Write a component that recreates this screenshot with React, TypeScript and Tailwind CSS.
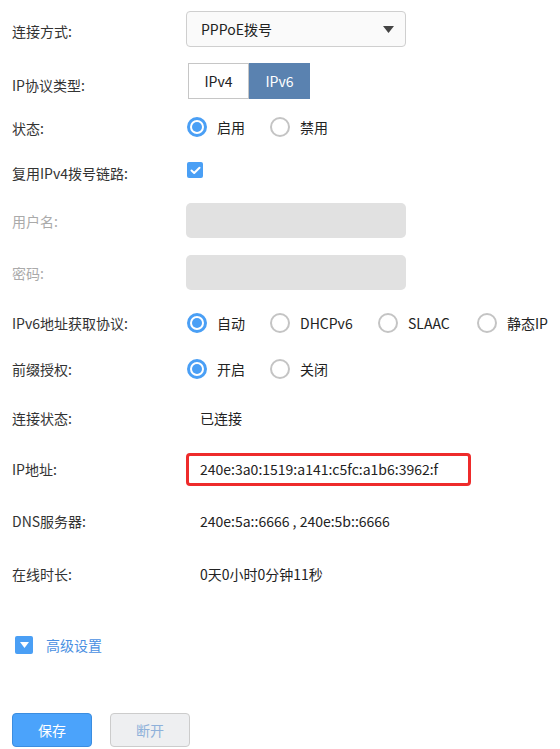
import React from 'react';

const font = { fontFamily: '"Microsoft YaHei", "Noto Sans CJK SC", "Noto Sans", sans-serif' };

function Radio({ checked, label }: { checked?: boolean; label: string }) {
  return (
    <div className="flex items-center">
      {checked ? (
        <span className="w-[20px] h-[20px] rounded-full border-[3px] border-[#4a9ff5] flex items-center justify-center">
          <span className="w-[10px] h-[10px] rounded-full bg-[#4a9ff5]" />
        </span>
      ) : (
        <span className="w-[20px] h-[20px] rounded-full border-[2px] border-[#c4c4c4] bg-white" />
      )}
      <span className="ml-[10px] text-[14px] text-[#222]">{label}</span>
    </div>
  );
}

function Row({
  label,
  h,
  mt,
  dim,
  labelShift = '',
  children,
}: {
  label: string;
  h: string;
  mt: string;
  dim?: boolean;
  labelShift?: string;
  children: React.ReactNode;
}) {
  return (
    <div className={`flex items-center ${h} ${mt}`}>
      <div className={`w-[174px] shrink-0 text-[14px] ${dim ? 'text-[#aaaaaa]' : 'text-[#333]'} ${labelShift}`}>
        {label}
      </div>
      <div className="flex items-center">{children}</div>
    </div>
  );
}

export default function App() {
  return (
    <div className="w-[560px] h-[749px] bg-white overflow-hidden pl-[12px] pt-[11px]" style={font}>
      <Row label="连接方式:" h="h-[36px]" mt="mt-0" labelShift="mt-[4px]">
        <div className="w-[220px] h-[36px] rounded-[4px] border border-[#cfcfcf] bg-[#fafafa] flex items-center justify-between pl-[14px] pr-[11px]">
          <span className="text-[14px] text-[#222]">PPPoE拨号</span>
          <svg width="11" height="7" viewBox="0 0 11 7">
            <path d="M0 0 L11 0 L5.5 7 Z" fill="#444" />
          </svg>
        </div>
      </Row>

      <Row label="IP协议类型:" h="h-[36px]" mt="mt-[16px]" labelShift="mt-[8px]">
        <div className="flex ml-[2px]">
          <div className="w-[61px] h-[36px] border border-[#c6c6c6] bg-white flex items-center justify-center text-[14px] text-[#222]">
            IPv4
          </div>
          <div className="w-[61px] h-[36px] bg-[#5a82b0] flex items-center justify-center text-[14px] text-white">
            IPv6
          </div>
        </div>
      </Row>

      <Row label="状态:" h="h-[20px]" mt="mt-[18px]" labelShift="mt-[2px]">
        <div className="flex items-center ml-[1px]">
          <div className="w-[83px]">
            <Radio checked label="启用" />
          </div>
          <Radio label="禁用" />
        </div>
      </Row>

      <Row label="复用IPv4拨号链路:" h="h-[16px]" mt="mt-[25px]" labelShift="mt-[6px]">
        <span className="w-[16px] h-[16px] rounded-[2px] bg-[#4a9ff5] flex items-center justify-center ml-[1px]">
          <svg width="11" height="9" viewBox="0 0 11 9">
            <path d="M1.5 4.5 L4.2 7 L9.5 1.8" stroke="#fff" strokeWidth="2" fill="none" strokeLinecap="round" strokeLinejoin="round" />
          </svg>
        </span>
      </Row>

      <Row label="用户名:" h="h-[35px]" mt="mt-[25px]" dim labelShift="mt-[2px]">
        <div className="w-[220px] h-[35px] rounded-[5px] bg-[#e1e1e1]" />
      </Row>

      <Row label="密码:" h="h-[35px]" mt="mt-[17px]" dim labelShift="mt-[2px]">
        <div className="w-[220px] h-[35px] rounded-[5px] bg-[#e1e1e1]" />
      </Row>

      <Row label="IPv6地址获取协议:" h="h-[20px]" mt="mt-[23px]">
        <div className="flex items-center ml-[1px]">
          <div className="w-[83px]">
            <Radio checked label="自动" />
          </div>
          <div className="w-[108px]">
            <Radio label="DHCPv6" />
          </div>
          <div className="w-[99px]">
            <Radio label="SLAAC" />
          </div>
          <div className="whitespace-nowrap">
            <Radio label="静态IP" />
          </div>
        </div>
      </Row>

      <Row label="前缀授权:" h="h-[20px]" mt="mt-[26px]">
        <div className="flex items-center ml-[1px]">
          <div className="w-[83px]">
            <Radio checked label="开启" />
          </div>
          <Radio label="关闭" />
        </div>
      </Row>

      <Row label="连接状态:" h="h-[20px]" mt="mt-[29px]">
        <span className="ml-[14px] text-[14px] text-[#222]">已连接</span>
      </Row>

      <Row label="IP地址:" h="h-[33px]" mt="mt-[25px]">
        <div className="w-[285px] h-[33px] border-[3px] border-[#ee2b2b] rounded-[4px] flex items-center pl-[11px] overflow-hidden">
          <span className="text-[14px] text-[#222] whitespace-nowrap">240e:3a0:1519:a141:c5fc:a1b6:3962:f</span>
        </div>
      </Row>

      <Row label="DNS服务器:" h="h-[20px]" mt="mt-[25px]">
        <span className="ml-[14px] text-[14px] text-[#222] whitespace-nowrap">240e:5a::6666 , 240e:5b::6666</span>
      </Row>

      <Row label="在线时长:" h="h-[20px]" mt="mt-[33px]">
        <span className="ml-[14px] text-[14px] text-[#222]">0天0小时0分钟11秒</span>
      </Row>

      <div className="flex items-center mt-[52px] ml-[3px] h-[18px]">
        <span className="w-[18px] h-[18px] rounded-[2px] bg-[#4a9ff5] flex items-center justify-center">
          <svg width="9" height="6" viewBox="0 0 9 6">
            <path d="M0 0 L9 0 L4.5 6 Z" fill="#fff" />
          </svg>
        </span>
        <span className="ml-[13px] text-[14px] text-[#4a90e2]">高级设置</span>
      </div>

      <div className="flex mt-[59px]">
        <button className="w-[80px] h-[34px] rounded-[4px] bg-[#4ba3fb] border border-[#3b8de0] text-white text-[14px]">
          保存
        </button>
        <button className="w-[80px] h-[34px] ml-[18px] rounded-[4px] bg-[#eeeff1] border border-[#cccccc] text-[#8fb1da] text-[14px]">
          断开
        </button>
      </div>
    </div>
  );
}
